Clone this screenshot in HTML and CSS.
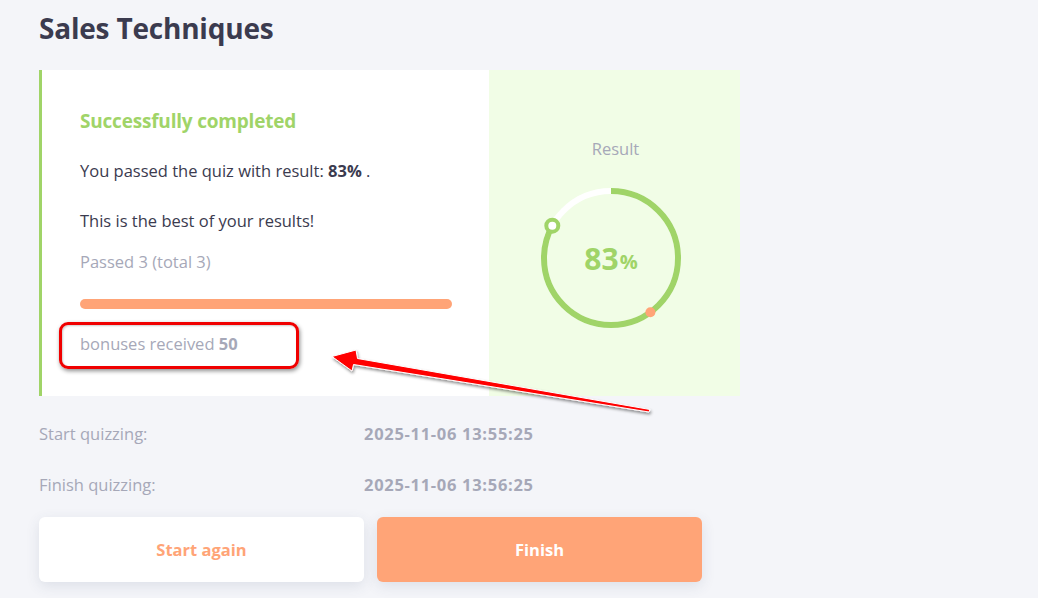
FILE: index.html
```html
<!DOCTYPE html>
<html lang="en">
<head>
<meta charset="utf-8">
<title>Sales Techniques</title>
<link rel="stylesheet" href="styles.css">
</head>
<body>
<main class="page">
  <h1 class="title">Sales Techniques</h1>

  <section class="card">
    <div class="card-main">
      <h2 class="status">Successfully completed</h2>
      <p class="text">You passed the quiz with result: <b>83%</b> .</p>
      <p class="text best">This is the best of your results!</p>
      <p class="muted passed">Passed 3 (total 3)</p>
      <div class="bar"></div>
      <p class="muted bonus">bonuses received <b>50</b></p>
    </div>
    <div class="card-side">
      <div class="side-label">Result</div>
      <div class="ring">
        <svg width="150" height="150" viewBox="0 0 150 150">
          <circle cx="75" cy="75" r="67" fill="none" stroke="#ffffff" stroke-width="6"/>
          <circle cx="75" cy="75" r="67" fill="none" stroke="#a0d468" stroke-width="6"
                  stroke-dasharray="349.4 421" transform="rotate(-90 75 75)"/>
          <circle cx="114.4" cy="129.2" r="5" fill="#ffa477"/>
          <circle cx="16.3" cy="42.7" r="6" fill="#ffffff" stroke="#a0d468" stroke-width="4"/>
        </svg>
        <div class="ring-value">83<span>%</span></div>
      </div>
    </div>
  </section>

  <dl class="times">
    <div class="time-row"><dt>Start quizzing:</dt><dd>2025-11-06 13:55:25</dd></div>
    <div class="time-row"><dt>Finish quizzing:</dt><dd>2025-11-06 13:56:25</dd></div>
  </dl>

  <div class="actions">
    <button class="btn btn-light">Start again</button>
    <button class="btn btn-primary">Finish</button>
  </div>

  <div class="annot-box"></div>
  <svg class="annot-arrow" width="1038" height="598" viewBox="0 0 1038 598">
    <defs>
      <filter id="sh" x="-10%" y="-50%" width="120%" height="200%">
        <feDropShadow dx="1" dy="2" stdDeviation="1.5" flood-color="#000" flood-opacity="0.45"/>
      </filter>
    </defs>
    <polygon points="332,356.5 356,350 357.5,358.5 650,409.5 649,412 353.5,364.5 352,371"
             fill="#ff0000" stroke="#ffffff" stroke-width="1" stroke-linejoin="miter" filter="url(#sh)"/>
  </svg>
</main>
</body>
</html>
```

FILE: styles.css
```css
* { box-sizing: border-box; }

html, body {
  margin: 0;
  padding: 0;
  background: #f4f5f9;
}

body {
  font-family: "Open Sans", "Noto Sans", sans-serif;
  color: #3b3b4f;
  width: 1038px;
  height: 598px;
  overflow: hidden;
}

.page {
  position: relative;
  padding: 9px 0 0 39px;
  height: 598px;
}

.title {
  margin: 0 0 22px;
  font-size: 28px;
  line-height: 39px;
  font-weight: 700;
  color: #3b3b4f;
  letter-spacing: -0.2px;
}

.card {
  display: grid;
  grid-template-columns: 450px 251px;
  width: 701px;
  height: 326px;
}

.card-main {
  background: #ffffff;
  border-left: 3px solid #a0d468;
  padding: 39px 36px 0 38px;
}

.status {
  margin: 0;
  font-size: 19px;
  line-height: 24px;
  font-weight: 700;
  color: #a0d468;
  letter-spacing: -0.2px;
}

.text {
  margin: 26px 0 0;
  font-size: 16.5px;
  line-height: 24px;
  color: #3b3b4f;
}

.text b { font-weight: 700; }

.best { margin-top: 26px; }

.muted {
  margin: 0;
  font-size: 16.5px;
  line-height: 24px;
  color: #a6a8b8;
}

.muted b { font-weight: 700; }

.passed { margin-top: 17px; }

.bar {
  margin-top: 25px;
  height: 10px;
  width: 372px;
  border-radius: 5px;
  background: #ffa477;
}

.bonus { margin-top: 23px; }

.card-side {
  background: #f1fde6;
  display: flex;
  flex-direction: column;
  align-items: center;
  padding-top: 67px;
}

.side-label {
  font-size: 16.5px;
  line-height: 24px;
  color: #a6a8b8;
  padding-left: 2px;
}

.ring {
  position: relative;
  width: 150px;
  height: 150px;
  margin-top: 22px;
  margin-right: 7px;
}

.ring svg { display: block; }

.ring-value {
  position: absolute;
  inset: 0;
  display: flex;
  align-items: center;
  justify-content: center;
  font-size: 30px;
  font-weight: 700;
  color: #a0d468;
  padding-top: 1px;
}

.ring-value span {
  font-size: 20px;
  margin-left: 1px;
  padding-top: 6px;
}

.times {
  margin: 26px 0 0;
  width: 701px;
}

.time-row {
  display: flex;
  line-height: 24px;
  font-size: 16.5px;
  margin-bottom: 27px;
}

.time-row:last-child { margin-bottom: 0; }

.time-row dt {
  width: 325px;
  color: #a6a8b8;
}

.time-row dd {
  margin: 0;
  font-weight: 700;
  color: #a6a8b8;
  letter-spacing: 0.7px;
}

.actions {
  display: flex;
  gap: 13px;
  margin-top: 20px;
}

.btn {
  width: 325px;
  height: 65px;
  border: none;
  border-radius: 6px;
  font-family: inherit;
  font-size: 16.5px;
  font-weight: 700;
  box-shadow: 0 4px 14px rgba(60, 70, 110, 0.12);
  cursor: pointer;
}

.btn-light {
  background: #ffffff;
  color: #ffa477;
}

.btn-primary {
  background: #ffa477;
  color: #ffffff;
}

.annot-box {
  position: absolute;
  left: 59px;
  top: 322px;
  width: 240px;
  height: 47px;
  border: 3px solid #f00000;
  border-radius: 9px;
  box-shadow: 1px 2px 4px rgba(0, 0, 0, 0.45), inset 1px 1px 2px rgba(0, 0, 0, 0.2);
}

.annot-arrow {
  position: absolute;
  left: 0;
  top: 0;
  pointer-events: none;
}
```
